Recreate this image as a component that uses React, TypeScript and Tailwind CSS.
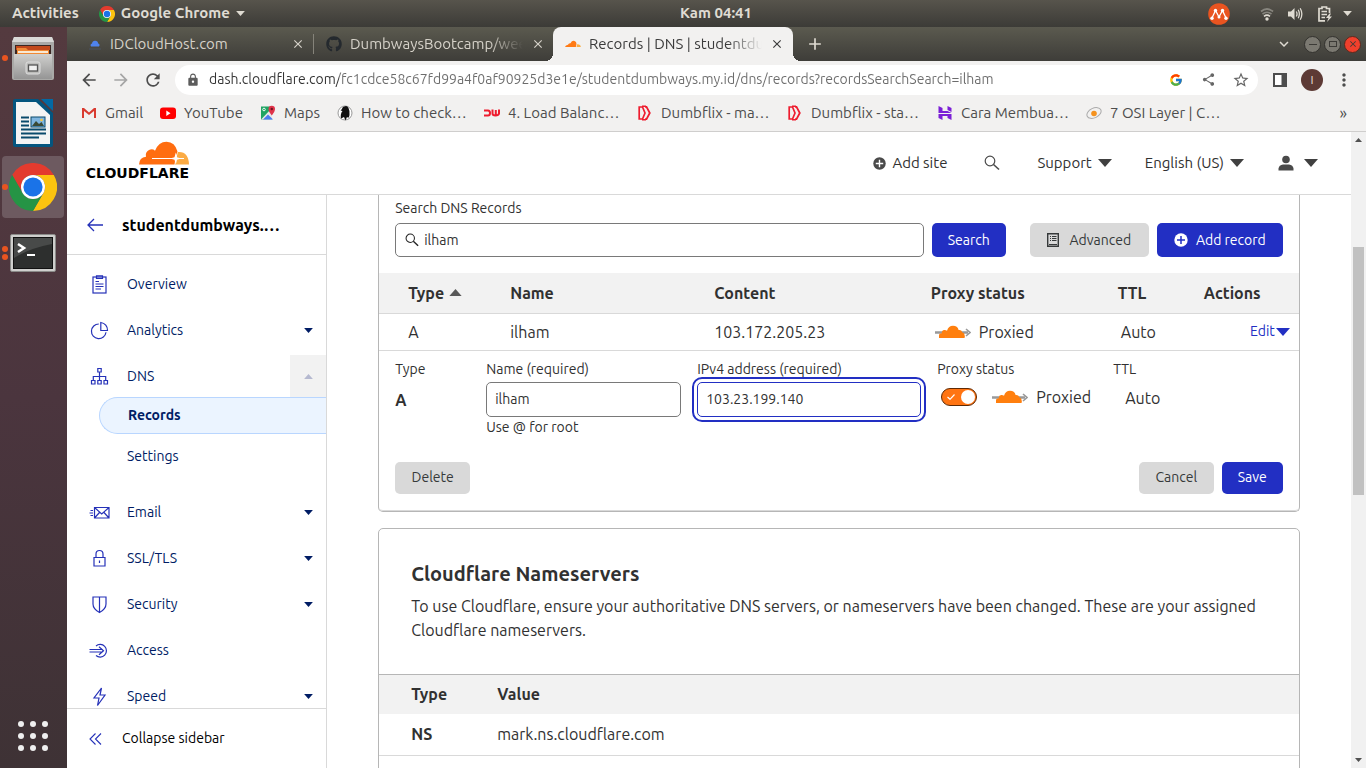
import React from "react";
import {
  MdArrowBack,
  MdArrowForward,
  MdRefresh,
  MdLock,
  MdShare,
  MdStarBorder,
  MdMoreVert,
  MdClose,
  MdAdd,
  MdExpandMore,
} from "react-icons/md";
import { FaGithub } from "react-icons/fa";
import { FcGoogle } from "react-icons/fc";

const icon = "shrink-0 block";

function ChromeLogo({ className }: { className: string }) {
  return (
    <svg viewBox="0 0 48 48" className={className} aria-hidden="true">
      <path d="M3.2 12A24 24 0 0 1 44.8 12L24 12A12 12 0 0 0 13.6 30Z" fill="#e33b2e" />
      <path d="M44.8 12A24 24 0 0 1 24 48L34.4 30A12 12 0 0 0 24 12Z" fill="#fcc30f" />
      <path d="M24 48A24 24 0 0 1 3.2 12L13.6 30A12 12 0 0 0 34.4 30Z" fill="#259445" />
      <circle cx="24" cy="24" r="12" fill="#fff" />
      <circle cx="24" cy="24" r="9.6" fill="#1a73e8" />
    </svg>
  );
}

function Caret({ className, up }: { className: string; up?: boolean }) {
  return (
    <svg viewBox="0 0 14 8" className={className} fill="currentColor" aria-hidden="true">
      {up ? <path d="M0 8L7 0L14 8Z" /> : <path d="M0 0H14L7 8Z" />}
    </svg>
  );
}

function ProxyCloud() {
  return (
    <svg viewBox="0 0 36 14" className="h-[14px] w-9 shrink-0" aria-hidden="true">
      <path d="M0 7.500H33" stroke="#999" strokeWidth="2.400" />
      <path d="M31 4L35 7.500L31 11" fill="none" stroke="#999" strokeWidth="1.600" />
      <path
        d="M4 13V10.500Q4 8.300 6.800 8.200Q6.600 5.300 9.300 5Q11 4.900 12 5.800Q13.500 0.800 18 0.800Q22.500 0.800 23.600 5Q26.600 4.600 27.200 7.300Q29.800 8 29.800 11V12.200Q29.800 13 29 13Z"
        fill="#ff7f0e"
      />
    </svg>
  );
}

function PlusCircle({ className, plus }: { className: string; plus: string }) {
  return (
    <svg viewBox="0 0 14 14" className={className} fill="currentColor" aria-hidden="true">
      <circle cx="7" cy="7" r="6.700" />
      <path d="M7 3V11M3 7H11" stroke={plus} strokeWidth="1.500" />
    </svg>
  );
}

function Magnifier({ className }: { className: string }) {
  return (
    <svg viewBox="0 0 16 16" className={className} fill="none" stroke="currentColor" strokeWidth="1.200" aria-hidden="true">
      <circle cx="6" cy="6" r="4.800" />
      <path d="M9.500 9.500L15 14.500" strokeWidth="1.600" />
    </svg>
  );
}

function TopBar() {
  return (
    <header className="flex h-[27px] shrink-0 items-center bg-linear-to-b from-[#57544c] to-[#3c3b37] text-[15px] font-bold text-[#dfdbd2]">
      <div className="mr-17 flex flex-1 items-center pl-3 whitespace-nowrap">
        <button className="mr-5">Activities</button>
        <button className="flex items-center gap-[6px]">
          <ChromeLogo className="size-4" />
          Google Chrome
          <Caret className="h-[5px] w-[9px]" />
        </button>
      </div>
      <time>Kam 04:41</time>
      <div className="flex flex-1 items-center justify-end pr-[14px]">
        <svg viewBox="0 0 22 22" className="mr-[29px] size-[22px]" aria-hidden="true">
          <circle cx="11" cy="11" r="10.800" fill="#e95420" />
          <path d="M4 15L7.500 7.500L11 14L14.500 7.500L18 15" fill="none" stroke="#fff" strokeWidth="1.300" />
          <g fill="#fff">
            <circle cx="4" cy="15.200" r="1.700" />
            <circle cx="7.500" cy="7.500" r="1.700" />
            <circle cx="11" cy="14" r="1.500" />
            <circle cx="14.500" cy="7.500" r="1.700" />
            <circle cx="18" cy="15.200" r="1.700" />
          </g>
        </svg>
        <svg viewBox="0 0 16 16" className="mr-3 size-4" fill="none" aria-hidden="true">
          <path d="M2 5.500Q8 0.500 14 5.500" stroke="#87857e" strokeWidth="1.800" />
          <path d="M3.500 8Q8 4.500 12.500 8" stroke="#87857e" strokeWidth="1.600" />
          <path d="M5 10.300Q8 8 11 10.300" stroke="#dfdbd2" strokeWidth="1.600" />
          <circle cx="8" cy="13" r="1.700" fill="#dfdbd2" />
        </svg>
        <svg viewBox="0 0 16 16" className="mr-[14px] size-4" aria-hidden="true">
          <path d="M1 5.500H4L7.500 2V14L4 10.500H1Z" fill="#dfdbd2" />
          <path d="M9.300 5.500Q10.800 8 9.300 10.500M11.200 3.800Q13.500 8 11.200 12.200M13.200 2.200Q16.500 8 13.200 13.800" fill="none" stroke="#dfdbd2" strokeWidth="1.300" />
        </svg>
        <svg viewBox="0 0 16 16" className="mr-[10px] size-4" fill="none" stroke="#dfdbd2" aria-hidden="true">
          <path d="M8 14.800H2V2.500H5V1H9.500V2.500H12.500V7" strokeWidth="1.700" />
          <path d="M4.500 5.500H10M4.500 8.500H10M4.500 11.500H8" strokeWidth="1.500" />
          <path d="M12.500 7.500L9 12H11.500L10 16L15 10.500H12.500L14 7.500Z" fill="#dfdbd2" stroke="none" />
        </svg>
        <Caret className="h-[5px] w-[9px]" />
      </div>
    </header>
  );
}

function DockDots({ count }: { count: number }) {
  return (
    <span className="absolute left-[2px] flex flex-col gap-[2px]">
      {Array.from({ length: count }, (_, i) => (
        <span key={i} className="size-[6px] rounded-full bg-[#e95420]" />
      ))}
    </span>
  );
}

function Dock() {
  return (
    <aside className="flex w-[67px] shrink-0 flex-col items-center bg-linear-to-b from-[#543a3f] via-[#4b353e] to-[#3e3235] pr-[2px] pb-[13px]">
      <button aria-label="Files" className="relative flex h-[62px] w-full items-center justify-center">
        <DockDots count={1} />
        <svg viewBox="0 0 42 44" className="h-11 w-[42px]">
          <defs>
            <linearGradient id="cab" x1="0" y1="0" x2="0" y2="1">
              <stop offset="0" stopColor="#d0d0ce" />
              <stop offset="1" stopColor="#959595" />
            </linearGradient>
          </defs>
          <path d="M2 1H40L42 6V42Q42 44 40 44H2Q0 44 0 42V6Z" fill="#a9a9a7" />
          <path d="M2 1H40L42 6H0Z" fill="#d9d9d7" />
          <rect x="3" y="9" width="36" height="12" fill="#3b2723" />
          <path d="M4 10H38V14H4Z" fill="#c2491b" />
          <path d="M5 12H14L16 14H37V21H5Z" fill="#f08a36" />
          <path d="M6 15H36V17H6Z" fill="#f8e9d4" />
          <path d="M2 18H40V43H2Z" fill="url(#cab)" />
          <rect x="14" y="26" width="14" height="12" rx="2" fill="#bdbdbb" stroke="#dedede" />
          <rect x="16.500" y="29" width="9" height="6" fill="#f0f0f0" stroke="#555" strokeWidth="1.300" />
        </svg>
      </button>
      <button aria-label="LibreOffice Writer" className="flex h-[67px] w-full items-center justify-center">
        <svg viewBox="0 0 40 48" className="h-12 w-10">
          <path d="M2 0H25L40 14V46Q40 48 38 48H2Q0 48 0 46V2Q0 0 2 0Z" fill="#04557f" />
          <path d="M28 0H40V12Z" fill="#0369a3" />
          <path d="M3 3H23L37 16V45H3Z" fill="#f4f4f4" />
          <path d="M8 18.500H16M8 22.500H16M8 26.500H16M8 30.500H33M8 34.500H33M8 38.500H26" stroke="#0a4a6c" strokeWidth="1.800" />
          <rect x="18" y="18" width="14" height="10" fill="#7fb5df" stroke="#0a4a6c" />
          <path d="M19 27L23 22L26 25L28.500 23L31 27Z" fill="#3b4a36" />
          <circle cx="28.500" cy="21" r="1.300" fill="#f5c542" />
        </svg>
      </button>
      <button aria-label="Google Chrome" className="relative flex h-[62px] w-full items-center justify-center">
        <span className="flex h-full w-[62px] items-center justify-center rounded-[4px] bg-[#6d5a60]">
          <ChromeLogo className="size-12" />
        </span>
        <DockDots count={1} />
      </button>
      <button aria-label="Terminal" className="relative mt-1 flex h-[62px] w-full items-center justify-center">
        <DockDots count={2} />
        <svg viewBox="0 0 46 38" className="h-[38px] w-[46px]">
          <rect x="0.500" y="0.500" width="45" height="37" rx="1.500" fill="#cfcfcd" stroke="#8b8b89" />
          <rect x="3.500" y="3.500" width="39" height="31" fill="#2d2f2e" stroke="#111" />
          <path d="M4 4H42V10Q20 14 4 24Z" fill="#484a49" />
          <path d="M8 10L14 14L8 18" fill="none" stroke="#fff" strokeWidth="2.600" />
          <path d="M17 21H25" stroke="#fff" strokeWidth="2" />
        </svg>
      </button>
      <button aria-label="Show Applications" className="mt-auto grid grid-cols-3 gap-[6px] p-1">
        {Array.from({ length: 9 }, (_, i) => (
          <span key={i} className="size-[6px] rounded-full bg-[#efefef]" />
        ))}
      </button>
    </aside>
  );
}

function MiniCloud() {
  return (
    <svg viewBox="0 0 16 16" className="size-4 shrink-0" aria-hidden="true">
      <path d="M0 11Q0.500 9 3 8.700Q3.500 7 5.500 7.200Q7 4.300 9.500 5Q11.500 5.700 11.500 8L10.800 11Z" fill="#ff7a14" />
      <path d="M11.500 11L12.200 8.200Q15.500 8 15.800 11Z" fill="#fbad41" />
    </svg>
  );
}

function TabStrip() {
  return (
    <div className="flex h-[34px] shrink-0 items-stretch bg-linear-to-b from-[#5b5a4f] to-[#3e3d39] pl-[6px] text-[15px]">
      <div className="flex w-60 items-center gap-[7px] pl-[14px] pr-2 text-[#d6d2c9]">
        <svg viewBox="0 0 16 16" className="size-4 shrink-0" aria-hidden="true">
          <path d="M4 10.500Q2.700 8.500 5 7.500Q5.500 4.500 8.200 4.700Q11 4.900 11.200 7.500Q13.500 8.500 12 10.500Z" fill="#4f83ee" />
          <path d="M2 13H14" stroke="#4a4f57" strokeWidth="1.500" />
        </svg>
        <span className="flex-1 truncate">IDCloudHost.com</span>
        <button aria-label="Close IDCloudHost.com"><MdClose className="size-[14px]" /></button>
      </div>
      <div className="flex w-60 items-center pr-2 text-[#d6d2c9]">
        <span className="mr-3 h-5 w-px bg-[#85837a]" />
        <FaGithub className="mr-2 size-4 shrink-0 text-[#24292e]" />
        <span className="mr-2 flex-1 overflow-hidden whitespace-nowrap [mask-image:linear-gradient(to_right,#000_80%,transparent)]">
          DumbwaysBootcamp/week
        </span>
        <button aria-label="Close DumbwaysBootcamp"><MdClose className="size-[14px]" /></button>
      </div>
      <div className="relative flex w-60 items-center gap-2 rounded-t-lg bg-[#f2f1f0] pl-3 pr-[9px] text-[#3b3b3b]">
        <span className="absolute bottom-0 -left-2 size-2 bg-[radial-gradient(circle_at_0_0,transparent_8px,#f2f1f0_8px)]" />
        <span className="absolute -right-2 bottom-0 size-2 bg-[radial-gradient(circle_at_100%_0,transparent_8px,#f2f1f0_8px)]" />
        <MiniCloud />
        <span className="flex-1 overflow-hidden whitespace-nowrap [mask-image:linear-gradient(to_right,#000_80%,transparent)]">
          Records | DNS | studentdumbways
        </span>
        <button aria-label="Close Records"><MdClose className="size-[14px]" /></button>
      </div>
      <button aria-label="New tab" className="ml-3 text-[#dfdbd2]"><MdAdd className="size-5" /></button>
      <div className="ml-auto flex items-center gap-[3px] pr-[5px] text-[#3c3b37]">
        <button aria-label="Search tabs" className="mr-2 text-[#dfdbd2]"><MdExpandMore className="size-[18px]" /></button>
        <button aria-label="Minimise" className="flex size-[17px] items-center justify-center rounded-full border border-[#33322e] bg-[#7b7971]">
          <span className="h-px w-2 bg-[#3c3b37]" />
        </button>
        <button aria-label="Maximise" className="flex size-[17px] items-center justify-center rounded-full border border-[#33322e] bg-[#7b7971]">
          <span className="h-[6px] w-2 border border-[#3c3b37]" />
        </button>
        <button aria-label="Close window" className="flex size-[17px] items-center justify-center rounded-full border border-[#5c2a1e] bg-[#f0402c]">
          <MdClose className="size-[10px]" />
        </button>
      </div>
    </div>
  );
}

function AddressBar() {
  return (
    <div className="flex h-[37px] shrink-0 items-center bg-[#f2f1f0] pl-3 pr-3 text-[#4d4d4d]">
      <button aria-label="Back" className="mr-3"><MdArrowBack className="size-5" /></button>
      <button aria-label="Forward" className="mr-3 text-[#a5a5a5]"><MdArrowForward className="size-5" /></button>
      <button aria-label="Reload" className="mr-3"><MdRefresh className="size-5" /></button>
      <div className="flex h-[30px] flex-1 items-center rounded-full bg-white pl-[11px] pr-2">
        <MdLock className="mr-[9px] size-[14px] shrink-0 text-[#5c5c5c]" />
        <input
          aria-label="Address and search bar"
          className="min-w-0 flex-1 bg-[linear-gradient(to_right,#333_130px,#6c6c6c_130px)] bg-clip-text text-[14px] text-transparent outline-none"
          defaultValue="dash.cloudflare.com/fc1cdce58c67fd99a4f0af90925d3e1e/studentdumbways.my.id/dns/records?recordsSearchSearch=ilham"
        />
        <button aria-label="Search with Google" className="mr-[18px]"><FcGoogle className="size-[14px]" /></button>
        <button aria-label="Share" className="mr-4"><MdShare className="size-[15px] text-[#666]" /></button>
        <button aria-label="Bookmark this page"><MdStarBorder className="size-[18px] text-[#666]" /></button>
      </div>
      <button aria-label="Side panel" className="ml-[15px]">
        <svg viewBox="0 0 14 14" className="size-[14px]"><path d="M1 1H13V13H1Z" fill="#fff" stroke="#4d4d4d" strokeWidth="2" /><path d="M8.500 1H13V13H8.500Z" fill="#4d4d4d" /></svg>
      </button>
      <button aria-label="Profile" className="ml-[14px] flex size-[22px] items-center justify-center rounded-full bg-[#5d3a35] text-[12px] text-[#e8dcda]">I</button>
      <button aria-label="Menu" className="ml-[11px]"><MdMoreVert className="size-5" /></button>
    </div>
  );
}

function DFlix() {
  return (
    <svg viewBox="0 0 16 16" className={icon + " size-4"} fill="none" stroke="#ee1c2e">
      <path d="M2.200 2V14H5.500L8 8L5.500 2Z" strokeWidth="1.700" />
      <path d="M8 1.800H9.500L12.800 8L9.500 14.200H8" strokeWidth="1.800" />
      <path d="M5 1.200H9M5 14.800H9" strokeWidth="1.400" />
    </svg>
  );
}

const bookmarks: { label: string; width: string; art: React.ReactNode }[] = [
  {
    label: "Gmail",
    width: "w-[79px]",
    art: (
      <svg viewBox="0 0 16 16" className={icon + " size-4"}>
        <path d="M1 13V3H3L8 7.500L13 3H15V13H13V6L8 10L3 6V13Z" fill="#d93b30" />
      </svg>
    ),
  },
  {
    label: "YouTube",
    width: "w-[100px]",
    art: (
      <svg viewBox="0 0 16 16" className={icon + " size-4"}>
        <rect x="0" y="2.500" width="16" height="11.500" rx="3" fill="#f00" />
        <path d="M6.300 5.500L10.500 8.200L6.300 11Z" fill="#fff" />
      </svg>
    ),
  },
  {
    label: "Maps",
    width: "w-[77px]",
    art: (
      <svg viewBox="0 0 16 16" className={icon + " size-4"}>
        <path d="M1 1.500H12V14.500H1Z" fill="#1fa463" />
        <path d="M1 14.500L12 3V14.500Z" fill="#e8e8e8" />
        <path d="M3 14.500L8 9.500L13 14.500Z" fill="#4a7df0" />
        <path d="M8.500 4A3.200 3.200 0 0 1 15 4Q15 6.500 11.800 10.500Q8.500 6.500 8.500 4Z" fill="#e0344a" />
        <circle cx="11.800" cy="4" r="1.200" fill="#6e1420" />
        <circle cx="4" cy="4.500" r="1.300" fill="none" stroke="#fff" strokeWidth="0.900" />
      </svg>
    ),
  },
  {
    label: "How to check…",
    width: "w-[147px]",
    art: (
      <svg viewBox="0 0 16 16" className={icon + " size-4"}>
        <circle cx="8" cy="8" r="7" fill="#fff" stroke="#999" />
        <path d="M9 1Q5 1.500 5 4L3.500 5.500L5.500 6Q3 9 4 13.500L7 12L8.500 15.500L10 12Q12 14 12.500 10Q13 6 11.500 3Q10.500 1 9 1Z" fill="#111" />
      </svg>
    ),
  },
  {
    label: "4. Load Balanc…",
    width: "w-[153px]",
    art: (
      <svg viewBox="0 0 16 16" className={icon + " size-4"} fill="none" stroke="#ee1c2e" strokeWidth="2">
        <path d="M0 5.500H4Q6 5.500 6 8T4 10.500H0M8.500 4.500V8.500Q8.500 10.500 11.500 10.500T15 8.500V4.500M11.800 5V10" />
      </svg>
    ),
  },
  { label: "Dumbflix - ma…", width: "w-[150px]", art: <DFlix /> },
  { label: "Dumbflix - sta…", width: "w-[150px]", art: <DFlix /> },
  {
    label: "Cara Membua…",
    width: "w-[149px]",
    art: (
      <svg viewBox="0 0 16 16" className={icon + " size-4"} fill="#7b1fd6">
        <path d="M1.500 1L5.500 3V6H10.500L14.500 8H1.500ZM10.500 1L14.500 3V7L10.500 5ZM1.500 9H14.500V15L10.500 13V11H5.500L5.500 15L1.500 13Z" />
      </svg>
    ),
  },
  {
    label: "7 OSI Layer | C…",
    width: "w-[134px]",
    art: (
      <svg viewBox="0 0 16 16" className={icon + " size-4"} fill="none">
        <ellipse cx="8" cy="8" rx="7.500" ry="4.800" stroke="#aaa" transform="rotate(-25 8 8)" />
        <circle cx="8" cy="8.500" r="2.800" fill="#f5921e" />
      </svg>
    ),
  },
];

function Bookmarks() {
  return (
    <nav aria-label="Bookmarks" className="flex h-[34px] shrink-0 items-center border-b border-[#cfcecd] bg-[#f2f1f0] pb-[3px] pl-[14px] pr-[19px] text-[15px] text-[#4d4d4d]">
      {bookmarks.map((b) => (
        <a key={b.label} href="#" className={"flex shrink-0 items-center gap-2 whitespace-nowrap " + b.width}>
          {b.art}
          {b.label}
        </a>
      ))}
      <button aria-label="More bookmarks" className="ml-auto text-[16px]">»</button>
    </nav>
  );
}

function SiteHeader() {
  return (
    <header className="flex h-[63px] shrink-0 items-center border-b border-[#d9d9d9] bg-white pl-4 pr-[33px] text-[15px] text-[#313131]">
      <a href="#" aria-label="Cloudflare home" className="mb-1 flex w-[106px] flex-col items-end">
        <svg viewBox="0 0 50 24" className="h-6 w-[50px]" aria-hidden="true">
          <path d="M0 23.500Q0.300 16.500 7 15.800Q6 11 10 9Q13.500 7.300 16 9.800Q19.500 0.700 27.500 0.700Q36 1 38.500 10.500Q37 14 36.500 17L35.500 23.500Z" fill="#ff6d10" />
          <path d="M36 23.500L38.800 11Q49.500 10 50 23.500Z" fill="#fbab44" />
          <path d="M13 17.500H45" stroke="#fff" strokeWidth="1" />
          <path d="M36.800 11.500L38 16.200L42 17.500L38 18.800L36.800 23.500L35.500 18.800L31 17.500L35.500 16.200Z" fill="#fff" />
        </svg>
        <span className="font-['DejaVu_Sans',sans-serif] text-[14px] leading-4 font-bold text-black">CLOUDFLARE</span>
      </a>
      <button className="ml-auto flex items-center gap-[6px]">
        <PlusCircle className="size-[13px] text-[#4a4a4a]" plus="#fff" />
        Add site
      </button>
      <button aria-label="Search" className="ml-[37px]"><Magnifier className="size-4 text-[#4a4a4a]" /></button>
      <button className="ml-[37px] flex items-center gap-[6px]">Support <Caret className="h-2 w-[14px] text-[#404040]" /></button>
      <button className="ml-[33px] flex items-center gap-[6px]">English (US) <Caret className="h-2 w-[14px] text-[#404040]" /></button>
      <button aria-label="Account" className="ml-[34px] flex items-center gap-[10px]">
        <svg viewBox="0 0 16 16" className="size-4" fill="#4a4a4a"><circle cx="8" cy="4.500" r="3.800" /><path d="M0.500 15.500V13.500Q1 10 5 9.500H11Q15 10 15.500 13.500V15.500Z" /></svg>
        <Caret className="h-2 w-[14px] text-[#404040]" />
      </button>
    </header>
  );
}

const navArt: Record<string, React.ReactNode> = {
  Overview: <><rect x="3" y="2" width="13" height="16" /><path d="M6.500 0.800H12.500V3.500H6.500ZM5.500 6.500H9M5.500 9H13.500M5.500 11.500H13.500M5.500 14H11" /></>,
  Analytics: <><path d="M8.800 3A7.300 7.300 0 1 0 16 11.200" /><path d="M10.800 1.500V9.500H17.500A7.500 7.500 0 0 0 10.800 1.500Z" /></>,
  DNS: <><path d="M7.800 1.500H11.200V5H7.800ZM1.500 13.500H5V17H1.500ZM7.800 13.500H11.200V17H7.800ZM14 13.500H17.500V17H14ZM9.500 5V13.500M3.300 13.500V9.500H15.700V13.500" /></>,
  Email: <><path d="M4.500 4.500H19V15H4.500ZM4.500 4.500L11.700 11L19 4.500M4.500 15L9.500 9.500M19 15L14 9.500M0.500 7.500H3M-0.500 10H3M0.500 12.500H3" /></>,
  "SSL/TLS": <><path d="M4 8.500H15V17H4ZM6 8.500V5A3.500 3.500 0 0 1 13 5V8.500M9.500 11.500V14" /></>,
  Security: <><path d="M3 2H16V9Q16 14 9.500 17.500Q3 14 3 9ZM9.500 2V17.500" /></>,
  Access: <><path d="M6 5A6.300 6.300 0 1 1 6 14.500M-0.500 8.500H12M-0.500 11H12M9 5.800L13.500 9.700L9 13.800" /></>,
  Speed: <><path d="M11.500 1L4 11H9L7.500 18.500L15 8H10Z" /></>,
};

function NavItem({ label, caret, open }: { label: string; caret?: boolean; open?: boolean }) {
  return (
    <li className={open ? "flex h-[42px] items-center" : "mb-1 flex h-[42px] items-center"}>
      <a href="#" className="flex flex-1 items-center gap-[18px] pl-[23px]">
        <svg viewBox="0 0 19 19" className="size-[19px] shrink-0 overflow-visible" fill="none" stroke="#2531b8" strokeWidth="1.200" aria-hidden="true">
          {navArt[label]}
        </svg>
        {label}
      </a>
      {caret && (
        <button
          aria-label={"Toggle " + label}
          className={
            open
              ? "flex h-full w-9 items-center justify-center bg-[#f2f2f2] text-[#b5b9d0]"
              : "flex h-full w-9 items-center justify-center"
          }
        >
          <Caret className="h-[5px] w-[9px]" up={open} />
        </button>
      )}
    </li>
  );
}

function Sidebar() {
  return (
    <aside className="flex w-[260px] shrink-0 flex-col border-r border-[#d9d9d9] bg-white text-[14px] text-[#001c64]">
      <div className="flex h-[60px] shrink-0 items-center gap-[19px] border-b border-[#d9d9d9] pl-5">
        <button aria-label="Back to sites">
          <svg viewBox="0 0 16 14" className="h-[14px] w-4" fill="none" stroke="#2531b8" strokeWidth="1.300"><path d="M1 7H16M7 1L1 7L7 13" /></svg>
        </button>
        <strong className="text-[16px] text-black">studentdumbways.…</strong>
      </div>
      <ul className="min-h-0 flex-1 overflow-hidden pt-2">
        <NavItem label="Overview" />
        <NavItem label="Analytics" caret />
        <NavItem label="DNS" caret open />
        <li className="mb-4">
          <ul>
            <li className="mb-1 pl-8">
              <a href="#" aria-current="page" className="flex h-[37px] items-center rounded-l-full border border-r-0 border-[#b9d6ff] bg-[#ebf4ff] pl-7 font-bold">Records</a>
            </li>
            <li className="pl-[60px]">
              <a href="#" className="flex h-[37px] items-center">Settings</a>
            </li>
          </ul>
        </li>
        <NavItem label="Email" caret />
        <NavItem label="SSL/TLS" caret />
        <NavItem label="Security" caret />
        <NavItem label="Access" />
        <NavItem label="Speed" caret />
      </ul>
      <button className="flex h-[60px] shrink-0 items-center gap-5 border-t border-[#d9d9d9] pl-[22px] text-black">
        <svg viewBox="0 0 13 12" className="h-3 w-[13px]" fill="none" stroke="#2531b8" strokeWidth="1.100"><path d="M6.500 0.500L1 6L6.500 11.500M12 0.500L6.500 6L12 11.500" /></svg>
        Collapse sidebar
      </button>
    </aside>
  );
}

const blueButton = "flex items-center justify-center rounded-[5px] bg-[#222fc3] text-white";
const grayButton = "flex items-center justify-center rounded-[5px] bg-[#d9d9d9] text-[#36393a]";

function RecordsCard() {
  return (
    <section className="rounded-b-[5px] border border-t-0 border-[#b6b6b6] bg-white">
      <div className="px-4 pt-[3px]">
        <label htmlFor="dns-search" className="block leading-5">Search DNS Records</label>
        <form className="mt-[5px] flex items-center pb-4" onSubmit={(e) => e.preventDefault()}>
          <div className="flex h-[34px] flex-1 items-center gap-[5px] rounded-[5px] border border-[#797979] pl-[9px]">
            <Magnifier className="size-[14px] text-[#222]" />
            <input id="dns-search" className="min-w-0 flex-1 outline-none" defaultValue="ilham" />
          </div>
          <button className={blueButton + " ml-2 h-[34px] w-[74px]"}>Search</button>
          <button type="button" className={grayButton + " ml-6 h-[34px] w-[119px] gap-[10px]"}>
            <svg viewBox="0 0 12 14" className="h-[14px] w-3" fill="none" stroke="#36393a"><path d="M0.700 0.700H11.300V13.300H0.700Z" strokeWidth="1.400" /><path d="M3 3.500H4M5 3.500H9.500M3 5.500H4M5 5.500H9.500M3 7.500H4M5 7.500H9.500M2 11.500H10" /></svg>
            Advanced
          </button>
          <button type="button" className={blueButton + " ml-2 h-[34px] w-[126px] gap-2"}>
            <PlusCircle className="size-[14px]" plus="#222fc3" />
            Add record
          </button>
        </form>
      </div>
      <table className="w-full table-fixed text-left text-[16px]">
        <thead>
          <tr className="h-10 border-b border-[#d9d9d9] bg-[#f2f2f2]">
            <th className="w-[115px] pl-[29px]"><span className="flex items-center gap-[5px]">Type <Caret className="h-[7px] w-[13px] text-[#595959]" up /></span></th>
            <th className="w-[204px] pl-4">Name</th>
            <th className="pl-4">Content</th>
            <th className="w-[187px] pl-4">Proxy status</th>
            <th className="w-[86px] pl-4">TTL</th>
            <th className="w-[111px] pl-4">Actions</th>
          </tr>
        </thead>
        <tbody>
          <tr className="h-[37px] border-b border-[#d9d9d9]">
            <td className="pl-[29px]">A</td>
            <td className="pl-4">ilham</td>
            <td className="pl-4">103.172.205.23</td>
            <td className="pl-5"><span className="flex items-center gap-2"><ProxyCloud />Proxied</span></td>
            <td className="pl-[19px]">Auto</td>
            <td className="pr-[9px]"><button className="ml-auto flex items-center gap-px text-[14px] text-[#222fc3]">Edit<Caret className="h-2 w-[14px]" /></button></td>
          </tr>
        </tbody>
      </table>
      <form className="rounded-b-[4px] border-b border-[#d9d9d9] px-4 pt-2 pb-4" onSubmit={(e) => e.preventDefault()}>
        <div className="grid grid-cols-[75px_195px_224px_160px_1fr] gap-x-4">
          <div>
            <div className="leading-5">Type</div>
            <strong className="mt-[11px] block text-[16px] leading-5">A</strong>
          </div>
          <div>
            <label htmlFor="rec-name" className="block leading-5">Name (required)</label>
            <input id="rec-name" className="mt-[3px] h-[35px] w-full rounded-[5px] border border-[#797979] px-2" defaultValue="ilham" />
            <div className="leading-5">Use @ for root</div>
          </div>
          <div>
            <label htmlFor="rec-ip" className="block leading-5">IPv4 address (required)</label>
            <input id="rec-ip" className="mt-[3px] h-[35px] w-full rounded-[5px] border border-[#222fc3] px-2 outline-2 outline-offset-3 outline-[#222fc3]" defaultValue="103.23.199.140" />
          </div>
          <div>
            <div className="leading-5">Proxy status</div>
            <label className="mt-[6px] ml-1 flex items-center text-[16px]">
              <input type="checkbox" role="switch" defaultChecked className="peer sr-only" />
              <span className="mr-[15px] flex h-[18px] w-9 items-center justify-between rounded-full border border-[#5e2a05] bg-[#ff7412] pl-[5px] pr-px">
                <svg viewBox="0 0 8 6" className="h-[6px] w-2" fill="none" stroke="#fff" strokeWidth="1.200"><path d="M0.500 3L3 5.300L7.500 0.500" /></svg>
                <span className="size-[14px] rounded-full bg-white" />
              </span>
              <ProxyCloud />
              <span className="ml-2">Proxied</span>
            </label>
          </div>
          <div>
            <div className="leading-5">TTL</div>
            <div className="mt-[7px] ml-3 text-[16px]">Auto</div>
          </div>
        </div>
        <div className="mt-[25px] flex gap-2">
          <button type="button" className={grayButton + " mr-auto h-8 w-[75px]"}>Delete</button>
          <button type="button" className={grayButton + " h-8 w-[75px]"}>Cancel</button>
          <button className={blueButton + " h-8 w-[61px]"}>Save</button>
        </div>
      </form>
    </section>
  );
}

function NameserversCard() {
  return (
    <section className="mt-4 rounded-t-[5px] border border-[#b6b6b6] bg-white pb-10 text-[16px]">
      <div className="px-8 pt-[30px] pb-8">
        <h2 className="text-[20px] leading-[30px] font-bold">Cloudflare Nameservers</h2>
        <p className="mt-[5px] leading-6">
          To use Cloudflare, ensure your authoritative DNS servers, or nameservers have been changed. These are your assigned Cloudflare nameservers.
        </p>
      </div>
      <table className="w-full table-fixed border-t border-[#b6b6b6] text-left">
        <thead>
          <tr className="h-10 bg-[#f2f2f2]">
            <th className="w-[118px] pl-8">Type</th>
            <th>Value</th>
          </tr>
        </thead>
        <tbody>
          <tr className="h-[41px] border-b border-[#d9d9d9]">
            <th className="pl-8">NS</th>
            <td>mark.ns.cloudflare.com</td>
          </tr>
        </tbody>
      </table>
    </section>
  );
}

function ScrollBar() {
  return (
    <div className="flex w-[15px] shrink-0 flex-col items-center bg-[#f1f1f1] py-[6px] text-[#505050]">
      <Caret className="h-1 w-[7px]" up />
      <div className="flex-[105]" />
      <div className="w-[11px] flex-[248] bg-[#c1c1c1]" />
      <div className="flex-[263]" />
      <Caret className="h-1 w-[7px]" />
    </div>
  );
}

export default function App() {
  return (
    <div className="flex h-screen flex-col overflow-hidden font-[Ubuntu,'Noto_Sans',sans-serif]">
      <TopBar />
      <div className="flex min-h-0 flex-1">
        <Dock />
        <div className="flex min-w-0 flex-1 flex-col">
          <TabStrip />
          <AddressBar />
          <Bookmarks />
          <div className="flex min-h-0 flex-1 bg-white">
            <div className="flex min-w-0 flex-1 flex-col">
              <SiteHeader />
              <div className="flex min-h-0 flex-1">
                <Sidebar />
                <main className="min-w-0 flex-1 overflow-hidden text-[14px] text-[#313131]">
                  <div className="mx-auto w-9/10">
                    <RecordsCard />
                    <NameserversCard />
                  </div>
                </main>
              </div>
            </div>
            <ScrollBar />
          </div>
        </div>
      </div>
    </div>
  );
}
